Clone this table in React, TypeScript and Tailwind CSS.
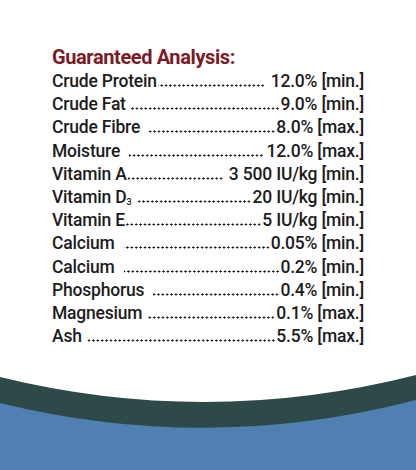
import React from "react";

type Row = { label: React.ReactNode; value: string; lg: number; rg: number };

const rows: Row[] = [
  { label: "Crude Protein", value: "12.0% [min.]", lg: 1, rg: 5 },
  { label: "Crude Fat", value: "9.0% [min.]", lg: 5, rg: 0 },
  { label: "Crude Fibre", value: "8.0% [max.]", lg: 9, rg: 0 },
  { label: "Moisture", value: "12.0% [max.]", lg: 9, rg: 2 },
  { label: "Vitamin A", value: "3 500 IU/kg [min.]", lg: 1, rg: 5 },
  {
    label: (
      <>
        Vitamin D<sub className="text-[9px] relative top-[2px]">3</sub>
      </>
    ),
    value: "20 IU/kg [min.]",
    lg: 6,
    rg: 0,
  },
  { label: "Vitamin E", value: "5 IU/kg [min.]", lg: 1, rg: 0 },
  { label: "Calcium", value: "0.05% [min.]", lg: 9, rg: 0 },
  { label: "Calcium", value: "0.2% [min.]", lg: 9, rg: 0 },
  { label: "Phosphorus", value: "0.4% [min.]", lg: 9, rg: 0 },
  { label: "Magnesium", value: "0.1% [max.]", lg: 5, rg: 0 },
  { label: "Ash", value: "5.5% [max.]", lg: 5, rg: 0 },
];

export default function App() {
  return (
    <div
      className="w-[416px] h-[470px] bg-white flex flex-col overflow-hidden"
      style={{ fontFamily: "Roboto, 'Liberation Sans', sans-serif" }}
    >
      <div className="h-[360px] pl-[52px] pr-[52px] pt-[44px] flex flex-col">
        <div className="text-[20px] leading-[26px] font-bold text-[#7a1c26] tracking-[-0.4px]">
          Guaranteed Analysis:
        </div>
        <div className="flex flex-col">
          {rows.map((r, i) => (
            <div
              key={i}
              className="flex items-baseline text-[17.5px] leading-[23.2px] font-medium text-[#1c1c1c] tracking-[-0.2px]"
            >
              <span className="whitespace-nowrap shrink-0">{r.label}</span>
              <span
                className="flex-1 min-w-0 h-[3px] bg-[radial-gradient(circle,#1c1c1c_0.9px,transparent_1.25px)] bg-[length:4.4px_3px] bg-repeat-x bg-right"
                style={{ marginLeft: r.lg, marginRight: r.rg + 1 }}
              />
              <span className="whitespace-nowrap shrink-0">{r.value}</span>
            </div>
          ))}
        </div>
      </div>
      <svg width="416" height="110" viewBox="0 0 416 110" className="block">
        <rect x="0" y="0" width="416" height="110" fill="#ffffff" />
        <path d="M0 17 Q208 68 416 15 L416 110 L0 110 Z" fill="#2e4a48" />
        <path d="M0 43 Q208 94 416 40 L416 110 L0 110 Z" fill="#5080b2" />
      </svg>
    </div>
  );
}
